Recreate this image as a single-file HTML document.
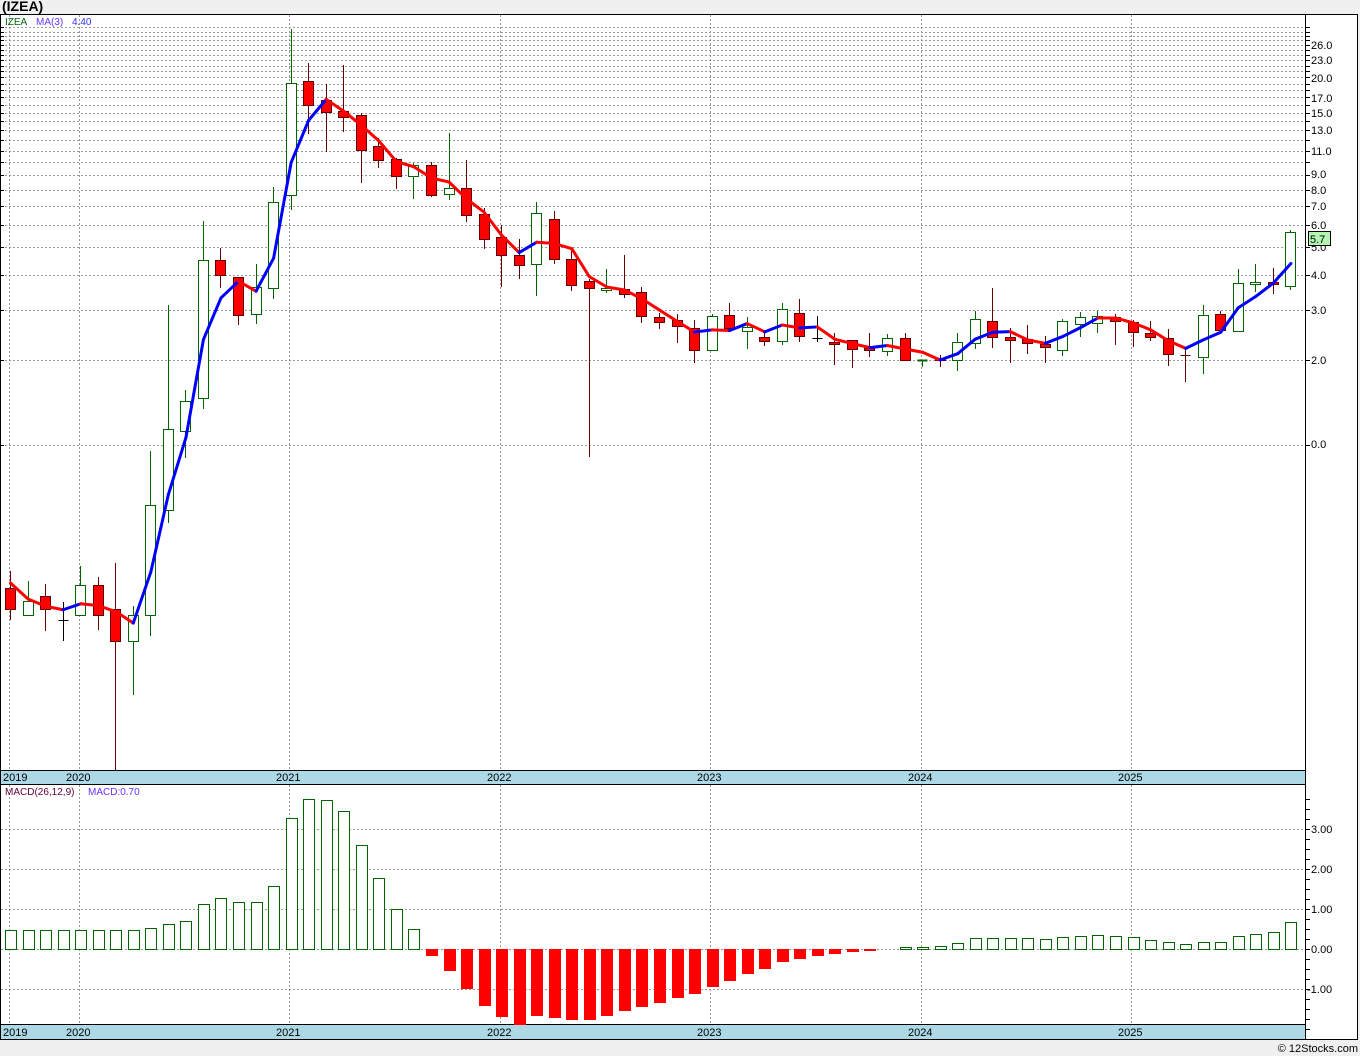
<!DOCTYPE html>
<html><head><meta charset="utf-8">
<style>
html,body{margin:0;padding:0;background:#f0f0f0;}
svg{display:block;}
text{font-family:"Liberation Sans",sans-serif;}
</style></head>
<body>
<svg id="s" width="1360" height="1056" xmlns="http://www.w3.org/2000/svg">
<rect x="0" y="0" width="1360" height="1056" fill="#f0f0f0"/>
<text x="2" y="11" font-size="14" font-weight="bold" fill="#000">(IZEA)</text>
<rect x="0.5" y="14.5" width="1357" height="1025" fill="#fff" stroke="#000"/>
<g id="grid"></g>
<line x1="1305.5" y1="14" x2="1305.5" y2="1040" stroke="#000"/>
<rect x="0.5" y="770.5" width="1305" height="14" fill="#add8e6" stroke="#000"/>
<rect x="0.5" y="1024.5" width="1305" height="15" fill="#add8e6" stroke="#000"/>
<g font-size="11" fill="#000">
<text x="3" y="781">2019</text><text x="66" y="781">2020</text><text x="276" y="781">2021</text><text x="487" y="781">2022</text><text x="697" y="781">2023</text><text x="908" y="781">2024</text><text x="1118" y="781">2025</text>
<text x="3" y="1036">2019</text><text x="66" y="1036">2020</text><text x="276" y="1036">2021</text><text x="487" y="1036">2022</text><text x="697" y="1036">2023</text><text x="908" y="1036">2024</text><text x="1118" y="1036">2025</text>
</g>
<g id="chart"></g>
<text x="5" y="25" font-size="10" fill="#006400">IZEA</text>
<text x="36" y="25" font-size="10" fill="#6633ff">MA(3)</text>
<text x="72" y="25" font-size="10" fill="#3333ff">4.40</text>
<text x="5" y="795" font-size="10" fill="#660033">MACD(26,12,9)</text>
<text x="88" y="795" font-size="10" fill="#6633ff">MACD:0.70</text>
<g font-size="11" fill="#000">
<text x="1311" y="49">26.0</text><text x="1311" y="64">23.0</text><text x="1311" y="82">20.0</text>
<text x="1311" y="102">17.0</text><text x="1311" y="117">15.0</text><text x="1311" y="134">13.0</text>
<text x="1311" y="155">11.0</text><text x="1311" y="178">9.0</text><text x="1311" y="194">8.0</text>
<text x="1311" y="210">7.0</text><text x="1311" y="229">6.0</text><text x="1311" y="251">5.0</text>
<text x="1311" y="279">4.0</text><text x="1311" y="314">3.0</text><text x="1311" y="364">2.0</text>
<text x="1311" y="448">0.0</text>
<text x="1311" y="833">3.00</text><text x="1311" y="873">2.00</text><text x="1311" y="913">1.00</text>
<text x="1311" y="953">0.00</text><text x="1307" y="993">-1.00</text>
</g>
<rect x="1308.5" y="231.5" width="22" height="14" fill="#b4f5b4" stroke="#000"/>
<text x="1310" y="243" font-size="11" fill="#000">5.7</text>
<text x="1358" y="1052" font-size="11" fill="#000" text-anchor="end">© 12Stocks.com</text>
</svg>
<script>
(function(){
var NS="http://www.w3.org/2000/svg";
var grid=document.getElementById('grid'),ch=document.getElementById('chart');
function el(p,tag,a){var e=document.createElementNS(NS,tag);for(var k in a)e.setAttribute(k,a[k]);p.appendChild(e);return e;}
function py(p){return 360-122.8*(Math.log(p)-0.693);}
for(var p=1;p<=30;p++){var y=Math.round(py(p))+0.5;if(y<20)continue;
 el(grid,'line',{x1:1,y1:y,x2:1305,y2:y,stroke:'#999','stroke-dasharray':'2,2'});
 el(grid,'line',{x1:1305,y1:y,x2:1310,y2:y,stroke:'#000'});
 el(grid,'line',{x1:1,y1:y,x2:4,y2:y,stroke:'#000'});}
[829,869,909,949,989].forEach(function(y){y+=0.5;el(grid,'line',{x1:1,y1:y,x2:1305,y2:y,stroke:'#999','stroke-dasharray':'2,2'});});
for(var y=799;y<1040;y+=10){el(grid,'line',{x1:1305,y1:y+0.5,x2:1310,y2:y+0.5,stroke:'#000'});}
[9,79,289,500,710,921,1131].forEach(function(x){x+=0.5;
 el(grid,'line',{x1:x,y1:15,x2:x,y2:770,stroke:'#999','stroke-dasharray':'2,2'});
 el(grid,'line',{x1:x,y1:785,x2:x,y2:1024,stroke:'#999','stroke-dasharray':'2,2'});});
var C=[
[588,609,571,620,'r'],[601,615,581,615,'g'],[596,609,584,631,'r'],[620,620,602,641,'x'],[585,615,566,615,'g'],
[585,615,577,630,'r'],[609,641,563,770,'r'],[615,641,606,695,'g'],[505,615,451,636,'g'],[429,510,305,523,'g'],
[401,431,390,458,'g'],[260,398,221,409,'g'],[260,275,248,288,'r'],[277,315,277,325,'r'],[287,314,264,324,'g'],
[202,288,187,299,'g'],[83,195,29,210,'g'],[81,105,63,134,'r'],[100,112,84,152,'r'],[111,117,65,132,'r'],
[115,150,113,183,'r'],[146,160,138,168,'r'],[159,176,158,189,'r'],[165,176,163,199,'g'],[165,195,162,197,'r'],
[188,194,133,200,'g'],[188,215,160,222,'r'],[214,239,208,249,'r'],[237,255,225,287,'r'],[255,265,239,279,'r'],
[213,264,202,296,'g'],[219,259,211,264,'r'],[259,285,249,291,'r'],[281,288,279,457,'r'],[288,290,269,293,'g'],
[289,294,255,298,'r'],[292,316,287,323,'r'],[317,322,313,329,'r'],[320,326,314,343,'r'],[328,350,320,363,'r'],
[316,350,314,350,'g'],[315,328,303,332,'r'],[327,331,317,349,'g'],[337,341,333,346,'r'],[309,341,303,345,'g'],
[313,336,299,342,'r'],[338,338,316,342,'x'],[342,344,333,365,'r'],[340,349,340,368,'r'],[348,350,333,357,'r'],
[338,351,334,356,'g'],[338,360,333,360,'r'],[360,360,360,367,'gx'],[358,360,355,367,'r'],[342,360,333,371,'g'],
[319,343,311,349,'g'],[321,337,288,348,'r'],[337,340,328,363,'r'],[339,343,325,354,'r'],[344,347,336,363,'r'],
[321,350,319,356,'g'],[317,324,312,337,'g'],[316,323,311,333,'g'],[317,321,314,345,'r'],[322,332,320,347,'r'],
[333,337,321,341,'r'],[338,354,329,366,'r'],[355,355,349,382,'k'],[315,357,305,374,'g'],[314,330,311,330,'r'],
[283,331,269,331,'g'],[282,284,264,292,'g'],[282,284,268,294,'r'],[232,286,230,290,'g']];
function X(i){return 10+17.54*i;}
C.forEach(function(c,i){var x=Math.round(X(i))+0.5,t=c[0],b=c[1],h=c[2],l=c[3],k=c[4];
 var wc=k=='g'||k=='gx'?'#006400':(k=='x'?'#000':'#600000');
 el(ch,'line',{x1:x,y1:h,x2:x,y2:l,stroke:wc});
 if(k=='x'||k=='k'||k=='gx'){el(ch,'line',{x1:x-5,y1:t+0.5,x2:x+5,y2:t+0.5,stroke:wc,'stroke-width':k=='gx'?2:1});}
 else if(k=='g'){el(ch,'rect',{x:x-5,y:t+0.5,width:10,height:Math.max(1,b-t),fill:'#fff',stroke:'#006400'});}
 else{el(ch,'rect',{x:x-5,y:t+0.5,width:10,height:Math.max(1,b-t),fill:'#ff0000',stroke:'#600000'});}
});
function pr(y){return Math.exp((360-y)/122.8+0.693);}
var cl=C.map(function(c){return c[4]=='g'?c[0]:c[1];});
var ma=[583,599];
for(var i=2;i<C.length;i++){ma.push(py((pr(cl[i])+pr(cl[i-1])+pr(cl[i-2]))/3));}
for(var i=1;i<ma.length;i++){
 el(ch,'line',{x1:X(i-1)+0.5,y1:ma[i-1],x2:X(i)+0.5,y2:ma[i],stroke:ma[i]<ma[i-1]?'#0000ff':'#ff0000','stroke-width':3,'stroke-linecap':'round'});}
var M=[930,930,930,930,930,930,930,930,928,924,921,904,898,902,902,886,818,799,800,811,845,878,909,929,
955,970,988,1005,1016,1024,1015,1017,1019,1019,1015,1010,1006,1002,997,993,986,980,973,968,961,958,955,953,951,950,949,
947,947,946,943,938,938,938,938,939,937,936,935,936,937,940,942,944,942,942,936,934,932,922];
M.forEach(function(v,i){var x=Math.round(X(i))-5;
 if(v<949){el(ch,'rect',{x:x+0.5,y:v+0.5,width:11,height:949-v,fill:'#fff',stroke:'#006400'});}
 else if(v>949){el(ch,'rect',{x:x+0.5,y:949.5,width:11,height:v-949,fill:'#ff0000',stroke:'#ff0000'});}
});
})();
</script>
</body></html>
